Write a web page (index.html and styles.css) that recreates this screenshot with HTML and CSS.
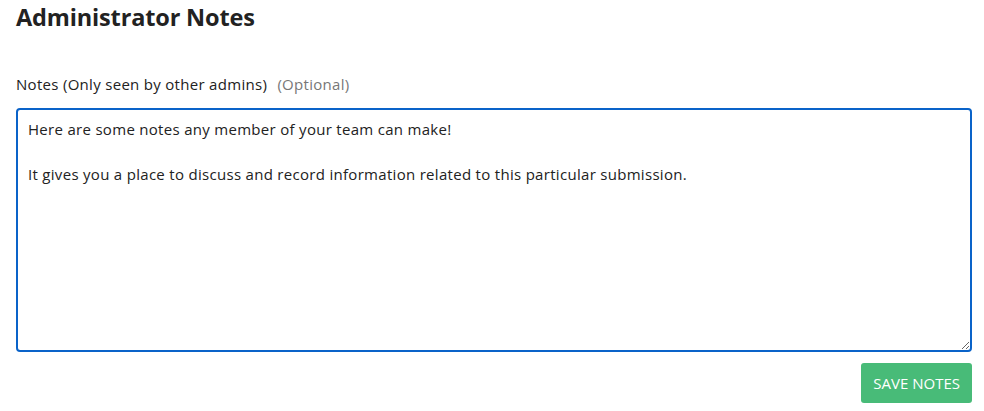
FILE: index.html
```html
<!DOCTYPE html>
<html>
<head>
<meta charset="utf-8">
<link rel="stylesheet" href="styles.css">
</head>
<body>
<div class="panel">
  <h2 class="title">Administrator Notes</h2>
  <label class="label" for="notes">Notes (Only seen by other admins) <span class="optional">(Optional)</span></label>
  <textarea id="notes" class="notes">Here are some notes any member of your team can make!

It gives you a place to discuss and record information related to this particular submission.</textarea>
  <div class="actions">
    <button class="save">SAVE NOTES</button>
  </div>
</div>
</body>
</html>
```
FILE: styles.css
```css
html, body {
  margin: 0;
  padding: 0;
  background: #fff;
}
body {
  font-family: "Open Sans", "Noto Sans", sans-serif;
  color: #222;
}
.panel {
  padding: 0 12px 0 16px;
  display: flex;
  flex-direction: column;
}
.title {
  margin: 2px 0 0;
  font-size: 23.5px;
  line-height: 30px;
  font-weight: 700;
  color: #222;
  letter-spacing: -0.15px;
}
.label {
  margin-top: 41px;
  font-size: 15px;
  line-height: 22px;
  color: #222;
  letter-spacing: 0.3px;
}
.optional {
  color: #777;
  margin-left: 6px;
}
.notes {
  margin-top: 13px;
  box-sizing: border-box;
  height: 244px;
  width: 100%;
  border: 2px solid #0a63c9;
  border-radius: 4px;
  padding: 8px 10px;
  font-family: "Open Sans", "Noto Sans", sans-serif;
  font-size: 15px;
  line-height: 22.5px;
  letter-spacing: 0.3px;
  color: #222;
  resize: vertical;
  outline: none;
}
.actions {
  display: flex;
  justify-content: flex-end;
  margin-top: 11px;
}
.save {
  background: #48bb78;
  color: #fff;
  border: none;
  border-radius: 3px;
  height: 40px;
  padding: 0 12px;
  font-family: "Open Sans", "Noto Sans", sans-serif;
  font-size: 15px;
  letter-spacing: 0;
}
```
